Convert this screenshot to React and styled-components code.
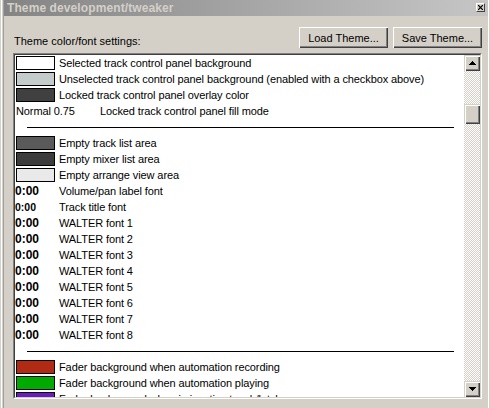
import React from "react";
import styled, { createGlobalStyle } from "styled-components";

const GlobalStyle = createGlobalStyle`
  html, body {
    margin: 0;
    padding: 0;
    background: #d4d0c8;
    overflow: hidden;
  }
  body {
    font-family: "Liberation Sans", Arial, sans-serif;
    font-size: 11px;
    color: #000;
  }
`;

const Window = styled.div`
  width: 490px;
  height: 408px;
  box-sizing: border-box;
  padding: 0 2px 0 4px;
  display: flex;
  flex-direction: column;
  background:
    linear-gradient(to right, #d4d0c8 0 1px, #ffffff 1px 2px, #d4d0c8 2px 3px, #a0a0a0 3px 4px, transparent 4px),
    linear-gradient(to left, #d4d0c8 0 1px, #ffffff 1px 2px, transparent 2px),
    #d4d0c8;
  overflow: hidden;
`;

const TitleBar = styled.div`
  height: 16px;
  flex: none;
  display: flex;
  align-items: center;
  justify-content: space-between;
  padding: 0 3px 0 3px;
  background: linear-gradient(to right, #848484, #c6c6c6);
`;

const TitleText = styled.span`
  font-weight: bold;
  font-size: 12px;
  color: #d4d0c8;
  letter-spacing: 0.1px;
`;

const CloseButton = styled.div`
  width: 9px;
  height: 9px;
  box-sizing: border-box;
  margin-bottom: 1px;
  background: #d4d0c8;
  border: 1px solid;
  border-color: #ffffff #404040 #404040 #ffffff;
  display: flex;
  align-items: center;
  justify-content: center;
`;

const Body = styled.div`
  flex: 1;
  display: flex;
  flex-direction: column;
  padding: 11px 6px 0 9px;
  min-height: 0;
`;

const Header = styled.div`
  display: flex;
  align-items: flex-start;
  justify-content: space-between;
  height: 21px;
  margin-bottom: 5px;
`;

const Label = styled.span`
  line-height: 13px;
  margin-top: 8px;
  margin-left: 1px;
`;

const ButtonGroup = styled.div`
  display: flex;
  gap: 5px;
`;

const Button = styled.button`
  width: ${(p) => p.w}px;
  height: 21px;
  box-sizing: border-box;
  padding: 0;
  font: inherit;
  color: #000;
  background: #d4d0c8;
  border: none;
  box-shadow: inset 1px 1px #ffffff, inset -1px -1px #404040,
    inset -2px -2px #808080;
`;

const ListBox = styled.div`
  width: 469px;
  height: 346px;
  box-sizing: border-box;
  display: flex;
  background: #fff;
  border: 1px solid;
  border-color: #808080 #ffffff #ffffff #808080;
`;

const ListInner = styled.div`
  flex: 1;
  display: flex;
  border: 1px solid;
  border-color: #404040 #d4d0c8 #d4d0c8 #404040;
  min-height: 0;
`;

const Rows = styled.div`
  flex: 1;
  overflow: hidden;
  display: flex;
  flex-direction: column;
`;

const Row = styled.div`
  height: 16px;
  flex: none;
  display: flex;
  align-items: center;
  white-space: nowrap;
  line-height: 16px;
  letter-spacing: -0.1px;
`;

const Swatch = styled.div`
  width: 39px;
  height: 14px;
  box-sizing: border-box;
  margin: 0 4px 0 1px;
  border: 1px solid #000;
  background: ${(p) => p.color};
`;

const FontSample = styled.span`
  width: 44px;
  font-weight: bold;
  font-size: ${(p) => p.size}px;
  letter-spacing: 0;
`;

const ModeValue = styled.span`
  width: 84px;
  padding-left: 1px;
`;

const Separator = styled.div`
  height: 16px;
  flex: none;
  display: flex;
  align-items: center;
  padding: 0 10px 0 12px;
  &::after {
    content: "";
    flex: 1;
    height: 1px;
    background: #000;
  }
`;

const ScrollBar = styled.div`
  width: 16px;
  display: flex;
  flex-direction: column;
  background: repeating-conic-gradient(#ffffff 0 25%, #d4d0c8 0 50%) 0 0 / 2px 2px;
`;

const ScrollButton = styled.div`
  width: 16px;
  height: 16px;
  box-sizing: border-box;
  flex: none;
  background: #d4d0c8;
  box-shadow: inset 1px 1px #d4d0c8, inset 2px 2px #ffffff,
    inset -1px -1px #404040, inset -2px -2px #808080;
  display: flex;
  align-items: center;
  justify-content: center;
`;

const Thumb = styled(ScrollButton)`
  height: 20px;
  margin-top: ${(p) => p.offset}px;
`;

const Track = styled.div`
  flex: 1;
`;

const Arrow = ({ down }) => (
  <svg width="7" height="4" viewBox="0 0 7 4">
    <path d={down ? "M0 0h7L3.5 4z" : "M3.5 0L7 4H0z"} fill="#000" shapeRendering="crispEdges" />
  </svg>
);

const colorRows = [
  { color: "#ffffff", text: "Selected track control panel background" },
  { color: "#c4cccb", text: "Unselected track control panel background (enabled with a checkbox above)" },
  { color: "#404040", text: "Locked track control panel overlay color" },
];

const areaRows = [
  { color: "#5a5a5a", text: "Empty track list area" },
  { color: "#3c3c3c", text: "Empty mixer list area" },
  { color: "#e9e9e9", text: "Empty arrange view area" },
];

const fontRows = [
  { size: 12, text: "Volume/pan label font" },
  { size: 10.5, text: "Track title font" },
  ...[1, 2, 3, 4, 5, 6, 7, 8].map((n) => ({ size: 12, text: `WALTER font ${n}` })),
];

const faderRows = [
  { color: "#b02a14", text: "Fader background when automation recording" },
  { color: "#00aa00", text: "Fader background when automation playing" },
  { color: "#6a1cc0", text: "Fader background when in inactive touch/latch" },
];

const ColorRow = ({ color, text }) => (
  <Row>
    <Swatch color={color} />
    <span>{text}</span>
  </Row>
);

const App = () => {
  return (
    <>
      <GlobalStyle />
      <Window>
        <TitleBar>
          <TitleText>Theme development/tweaker</TitleText>
          <CloseButton>
            <svg width="5" height="5" viewBox="0 0 5 5">
              <path d="M0 0L5 5M5 0L0 5" stroke="#000" strokeWidth="1.2" />
            </svg>
          </CloseButton>
        </TitleBar>
        <Body>
          <Header>
            <Label>Theme color/font settings:</Label>
            <ButtonGroup>
              <Button w={89}>Load Theme...</Button>
              <Button w={89}>Save Theme...</Button>
            </ButtonGroup>
          </Header>
          <ListBox>
            <ListInner>
              <Rows>
                {colorRows.map((r) => (
                  <ColorRow key={r.text} {...r} />
                ))}
                <Row>
                  <ModeValue>Normal 0.75</ModeValue>
                  <span>Locked track control panel fill mode</span>
                </Row>
                <Separator />
                {areaRows.map((r) => (
                  <ColorRow key={r.text} {...r} />
                ))}
                {fontRows.map((r) => (
                  <Row key={r.text}>
                    <FontSample size={r.size}>0:00</FontSample>
                    <span>{r.text}</span>
                  </Row>
                ))}
                <Separator />
                {faderRows.map((r) => (
                  <ColorRow key={r.text} {...r} />
                ))}
              </Rows>
              <ScrollBar>
                <ScrollButton>
                  <Arrow />
                </ScrollButton>
                <Thumb offset={33} />
                <Track />
                <ScrollButton>
                  <Arrow down />
                </ScrollButton>
              </ScrollBar>
            </ListInner>
          </ListBox>
        </Body>
      </Window>
    </>
  );
};

export default App;
